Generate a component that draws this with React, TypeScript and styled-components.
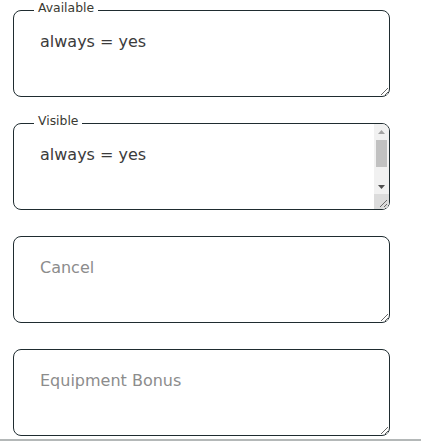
import styled, { createGlobalStyle } from 'styled-components';

const GlobalStyle = createGlobalStyle`
  html, body {
    margin: 0;
    padding: 0;
    background: #ffffff;
  }
  body {
    font-family: 'DejaVu Sans', 'Liberation Sans', sans-serif;
    overflow: hidden;
  }
`;

interface FieldDef {
  label?: string;
  value?: string;
  placeholder?: string;
  scroll?: boolean;
}

const fields: FieldDef[] = [
  { label: 'Available', value: 'always = yes' },
  { label: 'Visible', value: 'always = yes\n\n\n\n', scroll: true },
  { placeholder: 'Cancel' },
  { placeholder: 'Equipment Bonus' },
];

// classic (non overlay) scrollbar, drawn because the headless browser hides native ones
const ScrollBar = (): JSX.Element => (
  <Bar>
    <BarButton>
      <svg width="7" height="4" viewBox="0 0 7 4">
        <path d="M0 4L3.5 0L7 4Z" fill="#a3a3a3" />
      </svg>
    </BarButton>
    <Track>
      <Thumb />
    </Track>
    <BarButton>
      <svg width="7" height="4" viewBox="0 0 7 4">
        <path d="M0 0L7 0L3.5 4Z" fill="#505050" />
      </svg>
    </BarButton>
    <Corner>
      <svg width="15" height="15" viewBox="0 0 15 15">
        <path d="M13 6L6 13M13 10L10 13" stroke="#6b6b6b" strokeWidth="1" />
      </svg>
    </Corner>
  </Bar>
);

const App = (): JSX.Element => {
  return (
    <>
      <GlobalStyle />
      <Page>
        <Form>
          {fields.map((f, i) => (
            <Field key={i}>
              {f.label && <Legend>{f.label}</Legend>}
              <TextArea defaultValue={f.value} placeholder={f.placeholder} />
              {f.scroll && <ScrollBar />}
            </Field>
          ))}
        </Form>
        <BottomRule />
      </Page>
    </>
  );
};

const Page = styled.div`
  width: 423px;
  height: 441px;
  display: flex;
  flex-direction: column;
  box-sizing: border-box;
  padding-top: 10px;
`;
const Form = styled.div`
  display: flex;
  flex-direction: column;
  gap: 26px;
  padding-left: 13px;
`;
const Field = styled.div`
  position: relative;
  width: 377px;
  height: 87px;
`;
const Legend = styled.span`
  position: absolute;
  top: -10px;
  left: 21px;
  padding: 0 4px;
  background: #ffffff;
  font-size: 12.4px;
  line-height: 15px;
  color: #3a3a32;
  z-index: 1;
`;
const TextArea = styled.textarea`
  display: block;
  box-sizing: border-box;
  width: 100%;
  height: 100%;
  margin: 0;
  padding: 19px 20px 16px 26px;
  border: 1px solid #1f2c30;
  border-radius: 8px;
  font-family: 'DejaVu Sans', 'Liberation Sans', sans-serif;
  font-size: 16px;
  line-height: 24px;
  color: #3b3b3b;
  background: #ffffff;
  outline: none;
  overflow: hidden;

  &::placeholder {
    color: #8c8c8c;
  }
`;
const Bar = styled.div`
  position: absolute;
  top: 1px;
  right: 1px;
  bottom: 1px;
  width: 15px;
  display: flex;
  flex-direction: column;
  background: #f1f1f1;
  border-radius: 0 7px 7px 0;
  overflow: hidden;
  pointer-events: none;
`;
const BarButton = styled.div`
  height: 15px;
  flex: none;
  display: flex;
  align-items: center;
  justify-content: center;
`;
const Track = styled.div`
  flex: 1;
  padding: 1px 2px;
`;
const Thumb = styled.div`
  height: 27px;
  background: #c1c1c1;
`;
const Corner = styled.div`
  height: 15px;
  flex: none;
  background: #dcdcdc;
  display: flex;
`;
const BottomRule = styled.div`
  margin-top: auto;
  height: 2px;
  width: 421px;
  background: #b4b8b8;
`;

export default App;
